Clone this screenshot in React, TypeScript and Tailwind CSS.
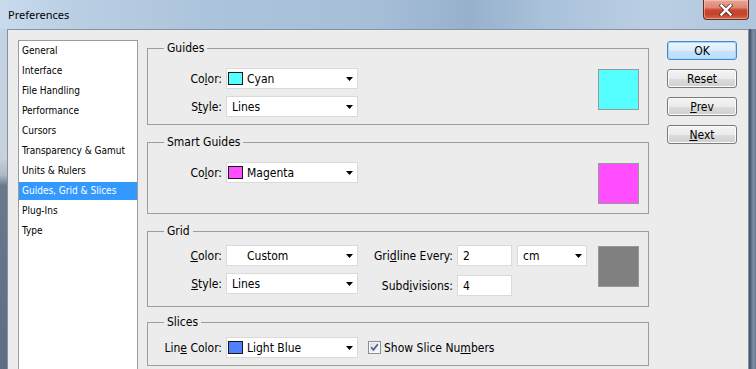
import React from "react";

const BASE =
  "font-['DejaVu_Sans_Condensed','DejaVu_Sans',sans-serif] font-stretch-condensed";

function Arrow() {
  return (
    <svg width="7" height="4" viewBox="0 0 7 4" className="shrink-0">
      <path d="M0 0H7L3.5 4Z" fill="#000" />
    </svg>
  );
}

function Select({
  w,
  swatch,
  text,
}: {
  w: string;
  swatch?: string | "none";
  text: string;
}) {
  return (
    <div
      className={`h-[21px] shrink-0 bg-white border border-[#dadada] flex items-center pr-[4px] text-[12px] leading-[14px] ${w} ${
        swatch ? "pl-[1px]" : "pl-[5px]"
      }`}
    >
      {swatch ? (
        <span
          className={`w-[15px] h-[13px] shrink-0 border ${
            swatch === "none" ? "border-transparent" : "border-[#1a1a1a]"
          } mr-[4px]`}
          style={swatch === "none" ? undefined : { backgroundColor: swatch }}
        />
      ) : null}
      <span className="flex-1 whitespace-nowrap">{text}</span>
      <Arrow />
    </div>
  );
}

function Input({ value }: { value: string }) {
  return (
    <div className="w-[55px] h-[21px] shrink-0 bg-white border border-[#dadada] flex items-center pl-[5px] text-[12px] leading-[14px]">
      {value}
    </div>
  );
}

function Label({ children, w }: { children: React.ReactNode; w: string }) {
  return (
    <div
      className={`shrink-0 text-right text-[12px] leading-[14px] whitespace-nowrap ${w}`}
    >
      {children}
    </div>
  );
}

function Preview({ color, mt }: { color: string; mt: string }) {
  return (
    <div
      className={`w-[41px] h-[41px] shrink-0 border border-[#989898] ml-auto mr-[9px] ${mt}`}
      style={{ backgroundColor: color }}
    />
  );
}

function Group({
  title,
  children,
  className,
}: {
  title: string;
  children: React.ReactNode;
  className?: string;
}) {
  return (
    <fieldset className={`border border-[#9d9d9d] ${className ?? ""}`}>
      <legend className="ml-[16px] px-[3px] text-[12px] leading-[14px]">
        {title}
      </legend>
      {children}
    </fieldset>
  );
}

function Button({
  children,
  primary,
}: {
  children: React.ReactNode;
  primary?: boolean;
}) {
  return (
    <div
      className={`h-[19px] w-[70px] rounded-[3px] border flex items-center justify-center text-[12px] leading-[14px] ${
        primary
          ? "border-[#3c8ad8] bg-[linear-gradient(180deg,#ecf6fe_0%,#dcedfc_50%,#c5e2fa_51%,#bddff9_100%)] shadow-[inset_0_0_0_1px_#a8d6f8]"
          : "border-[#7a7a7a] bg-[linear-gradient(180deg,#f4f4f4_0%,#ebebeb_50%,#dddddd_51%,#cfcfcf_100%)] shadow-[inset_0_0_0_1px_#fbfbfb]"
      }`}
    >
      {children}
    </div>
  );
}

const ITEMS = [
  "General",
  "Interface",
  "File Handling",
  "Performance",
  "Cursors",
  "Transparency & Gamut",
  "Units & Rulers",
  "Guides, Grid & Slices",
  "Plug-Ins",
  "Type",
];

function CloseX() {
  return (
    <svg width="14" height="12" viewBox="0 0 14 12">
      <path
        d="M2.5 1.5 11.5 10.5M11.5 1.5 2.5 10.5"
        stroke="#4b2a26"
        strokeWidth="4.2"
        strokeLinecap="square"
        opacity="0.75"
      />
      <path
        d="M2.5 1.5 11.5 10.5M11.5 1.5 2.5 10.5"
        stroke="#ffffff"
        strokeWidth="2.4"
        strokeLinecap="square"
      />
    </svg>
  );
}

function Checkbox() {
  return (
    <svg width="13" height="13" viewBox="0 0 13 13" className="shrink-0">
      <defs>
        <linearGradient id="cbg" x1="0" y1="0" x2="1" y2="1">
          <stop offset="0" stopColor="#dcdcdc" />
          <stop offset="1" stopColor="#fafafa" />
        </linearGradient>
      </defs>
      <rect x="0.5" y="0.5" width="12" height="12" fill="#f6f6f6" stroke="#8e8f8f" />
      <rect x="2" y="2" width="9" height="9" fill="url(#cbg)" />
      <path
        d="M3.2 6.3 5.4 8.8 9.8 3.2"
        fill="none"
        stroke="#4a5f94"
        strokeWidth="1.7"
      />
    </svg>
  );
}

export default function App() {
  return (
    <div
      className={`w-[756px] h-[369px] overflow-hidden flex flex-col text-black ${BASE}`}
    >
      {/* Title bar */}
      <div className="h-[29px] shrink-0 flex items-start bg-[linear-gradient(90deg,#c8daec_0%,#bacfe4_10%,#abc3db_28%,#a6bed8_50%,#97b0cc_62%,#a9c1da_72%,#bbcfe4_86%,#b0c6dd_100%)]">
        <span className="ml-[8px] mt-[8px] font-['Noto_Sans',sans-serif] font-stretch-normal text-[11px] leading-[14px]">
          Preferences
        </span>
        <div className="ml-auto mr-[7px] w-[46px] h-[20px] rounded-b-[4px] border border-t-0 border-[#6b2a20] flex items-center justify-center bg-[linear-gradient(180deg,#e8a597_0%,#dd8772_40%,#c9482e_52%,#c4432a_75%,#d46a4e_100%)] shadow-[inset_0_0_0_1px_rgba(255,220,210,0.45)]">
          <CloseX />
        </div>
      </div>

      <div className="flex-1 flex min-h-0">
        {/* left frame */}
        <div className="w-[7px] shrink-0 bg-[linear-gradient(180deg,#c3d3e4_0%,#c6d1dc_38%,#aeb9c5_43%,#6a798c_46%,#5d6d82_100%)]" />

        {/* dialog body */}
        <div className="flex-1 min-w-0 border-l border-t border-r border-[#8792a0] bg-[#ececec] flex items-start pt-[10px] pl-[10px] pr-[11px]">
          {/* list */}
          <div className="w-[120px] h-[340px] shrink-0 bg-white border border-[#9b9b9b] text-[10px] leading-[12px]">
            {ITEMS.map((it) => (
              <div key={it} className="h-[20px] py-px">
                <div
                  className={`h-[18px] pl-[3px] flex items-center whitespace-nowrap ${
                    it === "Guides, Grid & Slices" ? "bg-[#3399ff] text-white" : ""
                  }`}
                >
                  {it}
                </div>
              </div>
            ))}
          </div>

          {/* groups */}
          <div className="ml-[9px] mt-[1px] w-[502px] shrink-0 flex flex-col">
            <Group title="Guides">
              <div className="flex items-start pt-[13px] pb-[7px]">
                <div className="flex flex-col gap-[7px]">
                  <div className="flex items-center">
                    <Label w="w-[74px]">
                      Co<u>l</u>or:
                    </Label>
                    <div className="w-[4px]" />
                    <Select w="w-[132px]" swatch="#55ffff" text="Cyan" />
                  </div>
                  <div className="flex items-center">
                    <Label w="w-[74px]">
                      S<u>t</u>yle:
                    </Label>
                    <div className="w-[4px]" />
                    <Select w="w-[132px]" text="Lines" />
                  </div>
                </div>
                <Preview color="#55ffff" mt="mt-[1px]" />
              </div>
            </Group>

            <Group title="Smart Guides" className="mt-[10px]">
              <div className="flex items-start pt-[13px] pb-[9px]">
                <div className="flex items-center">
                  <Label w="w-[74px]">
                    Co<u>l</u>or:
                  </Label>
                  <div className="w-[4px]" />
                  <Select w="w-[132px]" swatch="#ff4dff" text="Magenta" />
                </div>
                <Preview color="#ff4dff" mt="mt-[1px]" />
              </div>
            </Group>

            <Group title="Grid" className="mt-[10px]">
              <div className="flex items-start pt-[7px] pb-[10px]">
                <div className="flex flex-col gap-[7px]">
                  <div className="flex items-center">
                    <Label w="w-[74px]">
                      <u>C</u>olor:
                    </Label>
                    <div className="w-[4px]" />
                    <Select w="w-[132px]" swatch="none" text="Custom" />
                  </div>
                  <div className="flex items-center">
                    <Label w="w-[74px]">
                      <u>S</u>tyle:
                    </Label>
                    <div className="w-[4px]" />
                    <Select w="w-[132px]" text="Lines" />
                  </div>
                </div>
                <div className="ml-[15px] flex flex-col gap-[9px]">
                  <div className="flex items-center">
                    <Label w="w-[80px]">
                      Gri<u>d</u>line Every:
                    </Label>
                    <div className="w-[4px]" />
                    <Input value="2" />
                    <div className="w-[5px]" />
                    <Select w="w-[70px]" text="cm" />
                  </div>
                  <div className="flex items-center">
                    <Label w="w-[80px]">
                      Subd<u>i</u>visions:
                    </Label>
                    <div className="w-[4px]" />
                    <Input value="4" />
                  </div>
                </div>
                <Preview color="#808080" mt="mt-[1px]" />
              </div>
            </Group>

            <Group title="Slices" className="mt-[8px]">
              <div className="flex items-center pt-[8px] pb-[7px]">
                <Label w="w-[74px]">
                  Lin<u>e</u> Color:
                </Label>
                <div className="w-[4px]" />
                <Select w="w-[132px]" swatch="#4f80ff" text="Light Blue" />
                <div className="ml-[10px] flex items-center">
                  <Checkbox />
                  <span className="ml-[3px] text-[12px] leading-[14px] whitespace-nowrap">
                    Show Slice Nu<u>m</u>bers
                  </span>
                </div>
              </div>
            </Group>
          </div>

          {/* buttons */}
          <div className="ml-[18px] mt-[1px] w-[70px] shrink-0 flex flex-col gap-[9px]">
            <Button primary>OK</Button>
            <Button>Reset</Button>
            <Button>
              <u>P</u>rev
            </Button>
            <Button>
              <u>N</u>ext
            </Button>
          </div>
        </div>

        {/* right frame */}
        <div className="w-[7px] shrink-0 bg-[linear-gradient(90deg,#3f4e62_0%,#5a6a80_30%,#7f8ea4_60%,#6b7b92_100%)]" />
      </div>
    </div>
  );
}
